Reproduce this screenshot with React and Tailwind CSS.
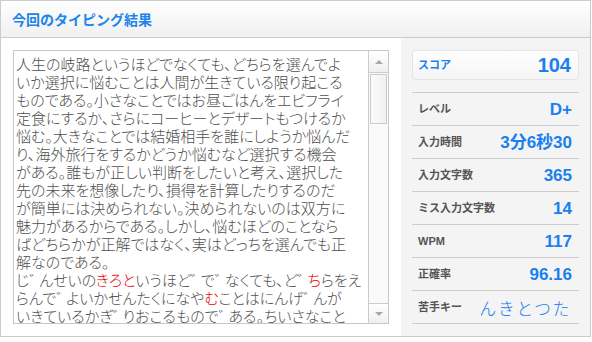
const JP = { fontFamily: '"Noto Sans CJK JP", sans-serif' };

const lines = [
  [{ t: '人生の岐路というほどでなくても、どちらを選んでよ' }],
  [{ t: 'いか選択に悩むことは人間が生きている限り起こる' }],
  [{ t: 'ものである。小さなことではお昼ごはんをエビフライ' }],
  [{ t: '定食にするか、さらにコーヒーとデザートもつけるか' }],
  [{ t: '悩む。大きなことでは結婚相手を誰にしようか悩んだ' }],
  [{ t: 'り、海外旅行をするかどうか悩むなど選択する機会' }],
  [{ t: 'がある。誰もが正しい判断をしたいと考え、選択した' }],
  [{ t: '先の未来を想像したり、損得を計算したりするのだ' }],
  [{ t: 'が簡単には決められない。決められないのは双方に' }],
  [{ t: '魅力があるからである。しかし、悩むほどのことなら' }],
  [{ t: 'ばどちらかが正解ではなく、実はどっちを選んでも正' }],
  [{ t: '解なのである。' }],
  [
    { t: 'じ゛んせいの' },
    { t: 'きろと', red: true },
    { t: 'いうほど゛で゛なくても、ど゛' },
    { t: 'ち', red: true },
    { t: 'らをえ' },
  ],
  [
    { t: 'らんで゛よいかせんたくになや' },
    { t: 'む', red: true },
    { t: 'ことはにんげ゛んが' },
  ],
  [{ t: 'いきているかぎ゛りおこるもので゛ある。ちいさなこと' }],
];

const stats = [
  { label: 'レベル', value: 'D+' },
  { label: '入力時間', value: '3分6秒30' },
  { label: '入力文字数', value: '365' },
  { label: 'ミス入力文字数', value: '14' },
  { label: 'WPM', value: '117' },
  { label: '正確率', value: '96.16' },
];

// the separate dakuten marks sit narrow in the reference
const Segment = ({ text }) =>
  text.split(/(゛)/).map((s, k) =>
    s === '゛' ? (
      <span key={k} className="tracking-[-5px]">
        ゛
      </span>
    ) : (
      s
    )
  );

const Label = ({ children, className = '' }) => (
  <span
    className={`text-[11px] font-bold ${className}`}
    style={{ fontFamily: '"Liberation Sans", "Noto Sans CJK JP", sans-serif' }}
  >
    {children}
  </span>
);

const Value = ({ children, size = 'text-[17px]' }) => (
  <span
    className={`${size} font-bold text-[#1a80f0] leading-none`}
    style={{ fontFamily: '"Liberation Sans", "Noto Sans CJK JP", sans-serif' }}
  >
    {children}
  </span>
);

export default function App() {
  return (
    <div className="w-[592px] h-[342px] bg-white">
      <div className="w-[591px] h-[337px] border border-[#cccccc] flex flex-col">
        {/* Header */}
        <div className="h-[37px] shrink-0 border-b border-[#cccccc] bg-gradient-to-b from-white to-[#f0f0f0] flex items-center pl-[11px]">
          <h1 className="text-[14px] font-bold text-[#1d84e8]" style={JP}>
            今回のタイピング結果
          </h1>
        </div>

        {/* Body */}
        <div className="flex flex-1">
          {/* Text area */}
          <div className="w-[400px] shrink-0 pl-[12px] pt-[12px]">
            <div className="w-[376px] h-[274px] border border-[#c8c8c8] flex overflow-hidden">
              <div
                className="flex-1 pl-[2px] pt-[4px] text-[15px] font-light leading-[18px] text-[#505050] overflow-hidden [font-feature-settings:'palt']"
                style={JP}
              >
                {lines.map((parts, i) => (
                  <div key={i} className="whitespace-nowrap">
                    {parts.map((p, j) => (
                      <span key={j} className={p.red ? 'text-[#ee0000]' : ''}>
                        <Segment text={p.t} />
                      </span>
                    ))}
                  </div>
                ))}
              </div>
              {/* Scrollbar */}
              <div className="w-[20px] shrink-0 border-l border-[#cccccc] bg-[#fafafa] flex flex-col">
                <div className="h-[22px] border-b border-[#cccccc] bg-gradient-to-b from-white to-[#f0f0f0] flex items-center justify-center">
                  <div className="w-0 h-0 border-l-[4px] border-r-[4px] border-b-[4px] border-l-transparent border-r-transparent border-b-[#a8a8a8]" />
                </div>
                <div className="mx-[1px] mt-[1px] h-[50px] border border-[#cccccc] bg-gradient-to-r from-[#fbfbfb] to-[#f0f0f0]" />
                <div className="flex-1" />
                <div className="h-[20px] border-t border-[#cccccc] bg-gradient-to-b from-white to-[#f0f0f0] flex items-center justify-center">
                  <div className="w-0 h-0 border-l-[4px] border-r-[4px] border-t-[4px] border-l-transparent border-r-transparent border-t-[#a8a8a8]" />
                </div>
              </div>
            </div>
          </div>

          {/* Results panel */}
          <div className="flex-1 bg-[#f4f4f4] px-[11px] pt-[12px]">
            <div className="h-[30px] rounded-[3px] border border-[#e4e4e4] bg-gradient-to-b from-white to-[#f5f5f5] flex items-center justify-between pl-[5px] pr-[7px]">
              <Label className="text-[#1a80f0]">スコア</Label>
              <Value size="text-[20px]">104</Value>
            </div>
            <div className="mt-[12px] border-t border-[#cccccc]">
              {stats.map((s) => (
                <div
                  key={s.label}
                  className="h-[33px] border-b border-[#cccccc] flex items-center justify-between pl-[6px] pr-[7px]"
                >
                  <Label className="text-[#555555]">{s.label}</Label>
                  <Value>{s.value}</Value>
                </div>
              ))}
              <div className="h-[33px] border-b border-[#cccccc] flex items-center justify-between pl-[6px] pr-[8px]">
                <Label className="text-[#555555]">苦手キー</Label>
                <span
                  className="text-[17px] font-light tracking-[1.5px] text-[#1a80f0] leading-none"
                  style={JP}
                >
                  んきとつた
                </span>
              </div>
            </div>
          </div>
        </div>
      </div>
    </div>
  );
}
